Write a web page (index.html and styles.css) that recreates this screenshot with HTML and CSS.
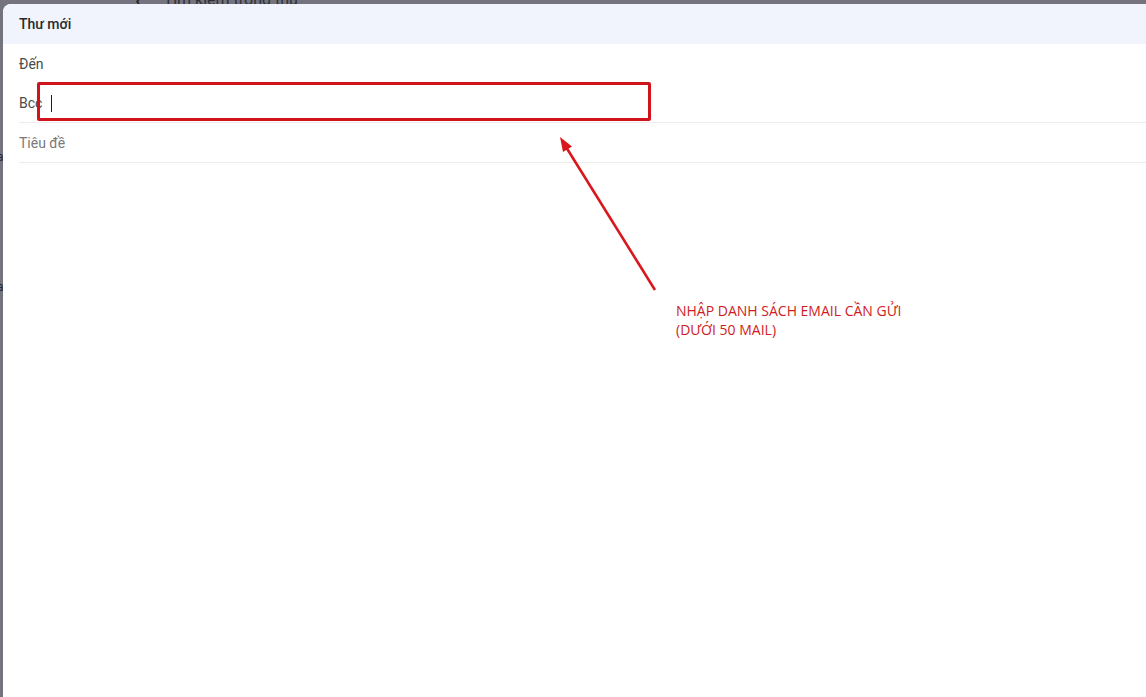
FILE: index.html
```html
<!DOCTYPE html>
<html lang="vi">
<head>
    <meta charset="UTF-8">
    <meta name="viewport" content="width=device-width, initial-scale=1.0">
    <title>Thư mới</title>
    <link rel="stylesheet" href="styles.css">
</head>
<body>

    <!-- thanh tìm kiếm phía sau, chỉ lộ ra một chút -->
    <div class="topbar">
        <span class="back">‹</span>
        <span class="search">Tìm kiếm trong thư</span>
        <span class="filter"></span>
    </div>

    <div class="page">
        <div class="side">
            <span class="side-a">a</span>
            <span class="side-b">a</span>
        </div>

        <div class="compose">
            <div class="compose-head">Thư mới</div>

            <div class="field field-to">
                <span class="label">Đến</span>
            </div>
            <div class="field field-bcc">
                <span class="label">Bcc</span>
                <span class="caret"></span>
            </div>
            <div class="field field-subject">
                <span class="placeholder">Tiêu đề</span>
            </div>

            <div class="compose-body"></div>

            <!-- Chú thích -->
            <div class="mark-box"></div>
            <svg class="mark-arrow" width="700" height="300" viewBox="0 0 700 300">
                <line x1="652" y1="286" x2="563" y2="143" stroke="#d7191d" stroke-width="2.6"/>
                <polygon points="557,133 569,142.5 560,148" fill="#d7191d"/>
            </svg>
            <div class="mark-note">
                NHẬP DANH SÁCH EMAIL CẦN GỬI<br>
                (DƯỚI 50 MAIL)
            </div>
        </div>
    </div>

</body>
</html>
```

FILE: styles.css
```css
body {
    margin: 0;
    padding: 0;
    background: #74737e; /* nền xám phía sau hộp thư */
    font-family: Roboto, 'Noto Sans', Arial, sans-serif;
    height: 100vh;
    overflow: hidden;
    display: flex;
    flex-direction: column;
}
.topbar {
    height: 4px;
    overflow: hidden;
    display: flex;
    align-items: flex-end;
    color: #1f1f24;
    flex-shrink: 0;
}
.topbar .back {
    margin-left: 135px;
    font-size: 22px;
    line-height: 10px;
    margin-bottom: -2px;
}
.topbar .search {
    margin-left: 22px;
    font-size: 16px;
    line-height: 10px;
    margin-bottom: -1px;
    color: #303038;
}
.topbar .filter {
    margin-left: 463px;
    width: 18px;
    height: 3px;
    border-top: 2px solid #26262c;
    margin-bottom: 1px;
}
.page {
    flex: 1;
    display: flex;
}
.side {
    width: 3px;
    overflow: hidden;
    display: flex;
    flex-direction: column;
    color: #2a2a30;
    font-size: 12px;
}
.side-a {
    margin-top: 146px;
    margin-left: -3px;
}
.side-b {
    margin-top: 116px;
    margin-left: -3px;
}
.compose {
    flex: 1;
    background: #ffffff;
    border-top-left-radius: 8px;
    position: relative;
    display: flex;
    flex-direction: column;
}
.compose-head {
    height: 40px;
    background: #f1f4fd;
    border-top-left-radius: 8px;
    display: flex;
    align-items: center;
    padding-left: 16px;
    font-size: 14px;
    font-weight: 500;
    color: #2a2a2a;
}
.field {
    margin-left: 16px;
    display: flex;
    align-items: center;
    font-size: 14px;
    color: #4a4a4a;
}
.field-to {
    height: 40px;
}
.field-bcc {
    height: 38px;
    border-bottom: 1px solid #ececec;
}
.field-subject {
    height: 39px;
    border-bottom: 1px solid #ececec;
}
.placeholder {
    color: #7a7a7a;
}
.caret {
    width: 1px;
    height: 17px;
    background: #1f1f1f;
    margin-left: 9px;
}
.compose-body {
    flex: 1;
}
/* Chú thích màu đỏ */
.mark-box {
    position: absolute;
    left: 34px;
    top: 78px;
    width: 608px;
    height: 33px;
    border: 3px solid #d0141c;
    border-radius: 2px;
}
.mark-arrow {
    position: absolute;
    left: 0;
    top: 0;
}
.mark-note {
    position: absolute;
    left: 673px;
    top: 297px;
    font-family: 'Open Sans', sans-serif;
    font-size: 14px;
    line-height: 19px;
    color: #cf1b22;
}
```
